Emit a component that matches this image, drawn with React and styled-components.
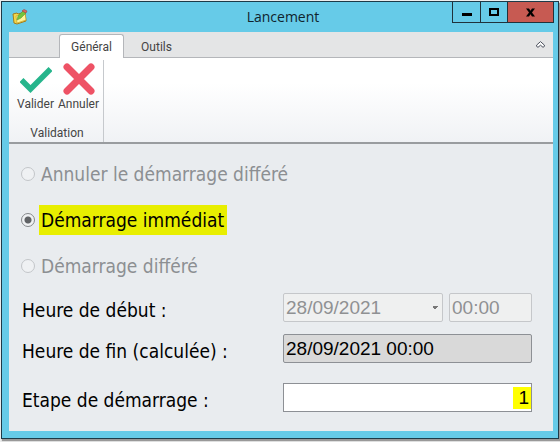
import React from "react";
import styled, { createGlobalStyle } from "styled-components";

const App = () => {
    return (
        <>
            <GlobalStyle />
            <StWindow>
                <StTitleBar>
                    <NoteIcon />
                    <StTitle>Lancement</StTitle>
                    <StWindowButtons>
                        <StWindowButton type="button" aria-label="Réduire">
                            <svg width="10" height="9" viewBox="0 0 10 9">
                                <rect x="0" y="5" width="10" height="3" fill="#000" />
                            </svg>
                        </StWindowButton>
                        <StWindowButton type="button" aria-label="Agrandir">
                            <svg width="10" height="8" viewBox="0 0 10 8">
                                <path d="M1 1h8v6H1z" fill="none" stroke="#000" strokeWidth="2" />
                            </svg>
                        </StWindowButton>
                        <StWindowButton type="button" aria-label="Fermer" $close>
                            <svg width="9" height="9" viewBox="0 0 9 9">
                                <path d="M0 .5h3l1.5 2.3L6 .5h3L6 4.5l3 4H6L4.500 6.2 3 8.5H0l3-4z" fill="#000" />
                            </svg>
                        </StWindowButton>
                    </StWindowButtons>
                </StTitleBar>

                <StClient>
                    <StTabs>
                        <StTab type="button" $active>Général</StTab>
                        <StTab type="button">Outils</StTab>
                        <StCollapse type="button" aria-label="Réduire le ruban">
                            <svg width="9" height="7" viewBox="0 0 9 7">
                                <path d="M4.5.6L8.4 4.1v1.3L7 6.3 4.5 4.2 2 6.3.6 5.4V4.1z" fill="#fff" stroke="#4a4f5c" strokeWidth="1" />
                            </svg>
                        </StCollapse>
                    </StTabs>

                    <StRibbon>
                        <StGroup>
                            <StGroupButtons>
                                <StTool type="button">
                                    <svg width="32" height="32" viewBox="0 0 32 32">
                                        <path d="M1.500 17l9 9L30.500 6" fill="none" stroke="#26b58c" strokeWidth="5.500" />
                                    </svg>
                                    Valider
                                </StTool>
                                <StTool type="button">
                                    <svg width="32" height="32" viewBox="0 0 32 32">
                                        <path d="M4 4l24 24M28 4L4 28" fill="none" stroke="#ee5265" strokeWidth="7" strokeLinecap="round" />
                                    </svg>
                                    Annuler
                                </StTool>
                            </StGroupButtons>
                            <StGroupName>Validation</StGroupName>
                        </StGroup>
                    </StRibbon>

                    <StBody>
                        <StChoices>
                            <StChoice $disabled>
                                <StRadio type="radio" name="demarrage" disabled />
                                <StChoiceText>Annuler le démarrage différé</StChoiceText>
                            </StChoice>
                            <StChoice>
                                <StRadio type="radio" name="demarrage" defaultChecked />
                                <StChoiceText $marked>Démarrage immédiat</StChoiceText>
                            </StChoice>
                            <StChoice $disabled>
                                <StRadio type="radio" name="demarrage" disabled />
                                <StChoiceText>Démarrage différé</StChoiceText>
                            </StChoice>
                        </StChoices>

                        <StFields>
                            <StRow>
                                <StLabel htmlFor="debut">Heure de début :</StLabel>
                                <StDateTime>
                                    <StSelect id="debut" disabled>
                                        <option>28/09/2021</option>
                                    </StSelect>
                                    <StInput aria-label="Heure" defaultValue="00:00" disabled />
                                </StDateTime>
                            </StRow>
                            <StRow>
                                <StLabel htmlFor="fin">Heure de fin (calculée) :</StLabel>
                                <StInput id="fin" defaultValue="28/09/2021 00:00" readOnly />
                            </StRow>
                            <StRow $spaced>
                                <StLabel htmlFor="etape">Etape de démarrage :</StLabel>
                                <StStepInput id="etape" defaultValue="1" />
                            </StRow>
                        </StFields>
                    </StBody>
                </StClient>
            </StWindow>
        </>
    );
};

const NoteIcon = () => (
    <svg width="16" height="16" viewBox="0 0 16 16">
        <path d="M1 5l4-1 1 1 7-2 1 9-9 3-3-1z" fill="#f3d84a" stroke="#a47d1c" strokeWidth="1" />
        <path d="M4 7l9-3 1 7-9 3z" fill="#fff59a" stroke="#c09a25" strokeWidth=".6" />
        <path d="M5 11l1-4 5-5 3 2-5 5z" fill="#72c43b" stroke="#5a9a3a" strokeWidth=".6" />
        <path d="M10 2l2-1.500 3 1.500-1 2z" fill="#e06b60" stroke="#a33e3b" strokeWidth=".6" />
    </svg>
);

export default App;

const GlobalStyle = createGlobalStyle`
* { box-sizing: border-box; }
body {
    margin: 0;
    padding: 1px 1px 3px;
    background-color: #eceded;
}
button, input, select { font: inherit; margin: 0; }
`;

const StWindow = styled.main`
border: 1px solid #1d3a48;
padding: 0 5px 7px 7px;
background-color: #66cbe8;
box-shadow: 1px 2px 1px #999;
font-family: "DejaVu Sans Condensed", "Noto Sans", sans-serif;
`;

const StTitleBar = styled.header`
display: grid;
grid-template-columns: 1fr auto 1fr;
align-items: center;
height: 30px;
margin-right: -1px;
padding-left: 3px;
`;

const StTitle = styled.h1`
margin: 0;
font-family: "Open Sans", sans-serif;
font-size: 14px;
font-weight: normal;
line-height: 30px;
color: #10242d;
`;

const StWindowButtons = styled.div`
display: flex;
align-self: start;
justify-self: end;
border: 1px solid #20323b;
border-top: none;
`;

const StWindowButton = styled.button`
display: flex;
align-items: center;
justify-content: center;
width: ${({ $close }) => ($close ? "46px" : "27px")};
height: 20px;
padding: 0;
border: none;
background-color: ${({ $close }) => ($close ? "#c75a52" : "transparent")};

& + & {
    border-left: 1px solid #20323b;
}
`;

const StClient = styled.div`
background-color: #e9ecef;
`;

const StTabs = styled.nav`
display: flex;
align-items: flex-end;
height: 26px;
padding-left: 50px;
border-bottom: 1px solid #b4b6ba;
background-color: #e4e5e6;
`;

const StTab = styled.button`
height: 24px;
width: 65px;
padding: 0;
margin-bottom: -1px;
border: 1px solid ${({ $active }) => ($active ? "#b4b6ba" : "transparent")};
border-bottom: none;
border-radius: 3px 3px 0 0;
background-color: ${({ $active }) => ($active ? "#fff" : "transparent")};
font-family: Roboto, sans-serif;
font-size: 12px;
color: #444;
`;

const StCollapse = styled.button`
display: flex;
align-self: center;
margin-left: auto;
padding: 0 8px;
border: none;
background: none;
`;

const StRibbon = styled.section`
display: flex;
height: 86px;
padding-top: 2px;
border-bottom: 2px solid #999c9f;
background: linear-gradient(#fff 30%, #f0f2f5);
`;

const StGroup = styled.div`
display: flex;
flex-direction: column;
justify-content: space-between;
padding: 3px 3px 0 5px;
border-right: 1px solid #c6c9cd;
font-family: Roboto, sans-serif;
font-size: 12px;
line-height: 18px;
color: #444;
`;

const StGroupButtons = styled.div`
display: flex;
`;

const StTool = styled.button`
display: flex;
flex-direction: column;
align-items: center;
width: 43px;
padding: 0;
border: none;
background: none;
color: inherit;
`;

const StGroupName = styled.div`
text-align: center;
`;

const StBody = styled.form`
padding: 15px 21px 13px 11px;
font-size: 19px;
`;

const StChoices = styled.div`
display: flex;
flex-direction: column;
align-items: flex-start;
gap: 16px;
`;

const StChoice = styled.label`
display: flex;
align-items: center;
gap: 3px;
color: ${({ $disabled }) => ($disabled ? "#8c8f92" : "#000")};
`;

const StRadio = styled.input`
appearance: none;
width: 14px;
height: 14px;
margin: 0 1px;
border: 1px solid #c3c6c9;
border-radius: 50%;
background-color: #eff1f3;

&:checked {
    border-color: #85888b;
    background: radial-gradient(#606366 3px, #eff1f3 4px);
}
`;

const StChoiceText = styled.span`
padding: 0 3px 0 2px;
line-height: 30px;
background-color: ${({ $marked }) => ($marked ? "#e8ee00" : "transparent")};
`;

const StFields = styled.div`
display: flex;
flex-direction: column;
gap: 6px;
margin-top: 12px;
`;

const StRow = styled.div`
display: grid;
grid-template-columns: 263px 1fr;
align-items: start;
margin-top: ${({ $spaced }) => ($spaced ? "8px" : "0")};
`;

const StLabel = styled.label`
padding-left: 2px;
line-height: 35px;
color: #000;
`;

const StDateTime = styled.div`
display: grid;
grid-template-columns: 160fr 83fr;
gap: 6px;
`;

const StInput = styled.input`
width: 100%;
min-width: 0;
height: 29px;
padding: 0 2px;
border: 1px solid #8d9095;
border-radius: 2px;
background-color: #d9d9d9;
font-family: "Liberation Sans", sans-serif;
font-size: 19px;
color: #000;

&:disabled {
    border-color: #c5c7ca;
    background-color: #eff0f0;
    color: #8f9193;
}
`;

const StSelect = styled(StInput).attrs({ as: "select" })`
appearance: none;

&:disabled {
    opacity: 1;
    background: linear-gradient(to bottom right, #777 50%, transparent 50%) right 4px center / 3px 3px no-repeat,
        linear-gradient(to bottom left, #777 50%, transparent 50%) right 7px center / 3px 3px no-repeat,
        #eff0f0;
}
`;

const StStepInput = styled(StInput)`
border-radius: 0;
background: linear-gradient(#ff0, #ff0) right center / 18px 22px no-repeat #fff;
text-align: right;
`;
